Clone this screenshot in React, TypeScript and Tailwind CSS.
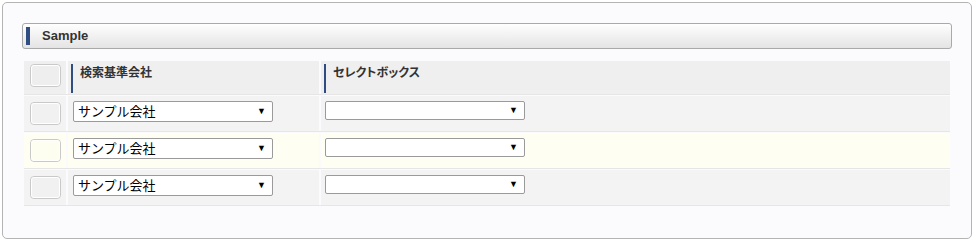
import React from "react";

const FONT = { fontFamily: '"Liberation Sans", "Noto Sans CJK JP", sans-serif' };

function Box({ bg }: { bg: string }) {
  return (
    <div className={`w-[31px] h-[23px] rounded-[4px] border border-[#c9c9c9] p-0 ${bg}`}>
      <div className="w-full h-full rounded-[3px] border border-white" />
    </div>
  );
}

function Select({ text, w, h }: { text?: string; w: string; h: string }) {
  return (
    <div
      className={`${w} ${h} bg-white border border-[#9a9a9a] rounded-[2px] flex items-center justify-between pl-[4px] pr-[6px]`}
    >
      <span className="text-[13px] text-black leading-none">{text ?? ""}</span>
      <span className="text-[9px] text-black leading-none">▼</span>
    </div>
  );
}

function Row({ bg, boxBg }: { bg: string; boxBg: string }) {
  return (
    <div className="flex gap-[2px] h-[36px] border-b border-[#e6e6e6]">
      <div className={`w-[42px] ${bg} flex justify-center pt-[6px]`}>
        <Box bg={boxBg} />
      </div>
      <div className={`w-[251px] ${bg} pl-[5px] pt-[5px]`}>
        <Select text="サンプル会社" w="w-[200px]" h="h-[21px]" />
      </div>
      <div className={`flex-1 ${bg} pl-[4px] pt-[5px]`}>
        <Select w="w-[200px]" h="h-[19px]" />
      </div>
    </div>
  );
}

export default function App() {
  return (
    <div className="w-[976px] h-[243px] bg-white p-[2px]" style={FONT}>
      <div className="w-[970px] h-[237px] border border-[#b4b4b4] rounded-[5px] bg-[#fbfbfd] pt-[20px] px-[19px]">
        <div className="h-[26px] border border-[#a9a9a9] rounded-[3px] bg-gradient-to-b from-[#fefefe] to-[#e4e4e4] flex items-center pl-[3px]">
          <div className="w-[4px] h-[18px] bg-[#2f4d80]" />
          <span className="ml-[12px] text-[13px] font-bold text-[#333]">Sample</span>
        </div>
        <div className="mx-[2px] mt-[12px] flex flex-col gap-[1px]">
          <div className="flex gap-[2px] h-[34px] border-b border-[#e6e6e6]">
            <div className="w-[42px] bg-[#efefef] flex justify-center pt-[3px]">
              <Box bg="bg-[#eeeeee]" />
            </div>
            <div className="w-[251px] bg-[#efefef] pl-[3px] pt-[3px] pb-[1px] flex">
              <div className="w-[2px] h-full bg-[#2f4d80]" />
              <span className="ml-[7px] mt-[2px] text-[12px] font-bold text-[#333] leading-[14px] [font-feature-settings:'palt']">
                検索基準会社
              </span>
            </div>
            <div className="flex-1 bg-[#efefef] pl-[3px] pt-[3px] pb-[1px] flex">
              <div className="w-[2px] h-full bg-[#2f4d80]" />
              <span className="ml-[7px] mt-[2px] text-[12px] font-bold text-[#333] leading-[14px] [font-feature-settings:'palt']">
                セレクトボックス
              </span>
            </div>
          </div>
          <Row bg="bg-[#f3f3f3]" boxBg="bg-[#f1f1f1]" />
          <Row bg="bg-[#fefef2]" boxBg="bg-[#fefef0]" />
          <Row bg="bg-[#f3f3f3]" boxBg="bg-[#f1f1f1]" />
        </div>
      </div>
    </div>
  );
}
